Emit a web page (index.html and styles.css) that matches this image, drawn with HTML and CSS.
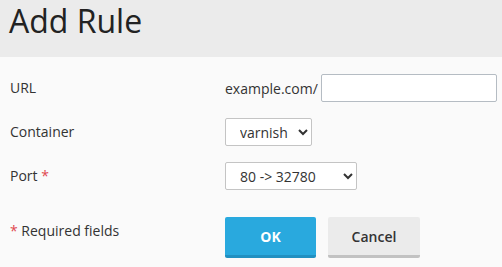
FILE: index.html
```html
<!DOCTYPE html>
<html lang="en">
<head>
  <meta charset="UTF-8" />
  <title>Add Rule</title>
  <link rel="stylesheet" href="styles.css">
</head>
<body>
  <div class="header">
    <h1>Add Rule</h1>
  </div>

  <form class="rule-form">
    <label for="url">URL</label>
    <div class="url-field">
      <span class="prefix">example.com/</span>
      <input type="text" id="url">
    </div>

    <label for="container">Container</label>
    <div>
      <select id="container" class="container-select">
        <option>varnish</option>
      </select>
    </div>

    <label for="port">Port <span class="req">*</span></label>
    <div>
      <select id="port" class="port-select">
        <option>80 -&gt; 32780</option>
      </select>
    </div>

    <div class="note"><span class="req">*</span> Required fields</div>
    <div class="actions">
      <button type="button" class="btn btn-primary">OK</button>
      <button type="button" class="btn">Cancel</button>
    </div>
  </form>
</body>
</html>
```

FILE: styles.css
```css
body {
  font-family: "Open Sans", Arial, sans-serif;
  margin: 0;
  padding: 0;
  background: #fafafa;
  color: #333;
  font-size: 14px;
}

.header {
  background: #ebebeb;
  height: 57px;
  padding: 0 9px;
  box-sizing: border-box;
  overflow: hidden;
}

h1 {
  margin: -1px 0 0;
  font-size: 32px;
  font-weight: 500;
  line-height: 44px;
  color: #222;
}

.rule-form {
  display: grid;
  grid-template-columns: 215px 1fr;
  row-gap: 16px;
  align-items: center;
  padding: 17px 0 0 10px;
}

label {
  line-height: 20px;
}

.req {
  color: #e0474f;
}

.url-field {
  display: flex;
  align-items: center;
  gap: 3px;
}

input {
  width: 176px;
  height: 28px;
  box-sizing: border-box;
  border: 1px solid #b5bcc3;
  border-radius: 2px;
  background: #fff;
  font: inherit;
  padding: 0 6px;
}

select {
  height: 28px;
  box-sizing: border-box;
  border: 1px solid #c4c4c4;
  border-radius: 2px;
  background: #fff;
  font: inherit;
  color: #333;
  padding: 0 0 0 10px;
}

.container-select {
  width: 87px;
}

.port-select {
  width: 132px;
}

.note {
  align-self: start;
  padding-top: 4px;
  margin-top: 11px;
  line-height: 20px;
}

.actions {
  display: flex;
  gap: 12px;
  margin-top: 11px;
}

.btn {
  width: 92px;
  height: 41px;
  border: none;
  border-bottom: 3px solid #c2c2c2;
  border-radius: 2px;
  background: #ebebeb;
  color: #333;
  font: inherit;
  font-weight: 600;
  cursor: pointer;
}

.btn-primary {
  width: 91px;
  background: #29a9de;
  border-bottom-color: #2190c1;
  color: #fff;
  font-weight: 700;
}
```
